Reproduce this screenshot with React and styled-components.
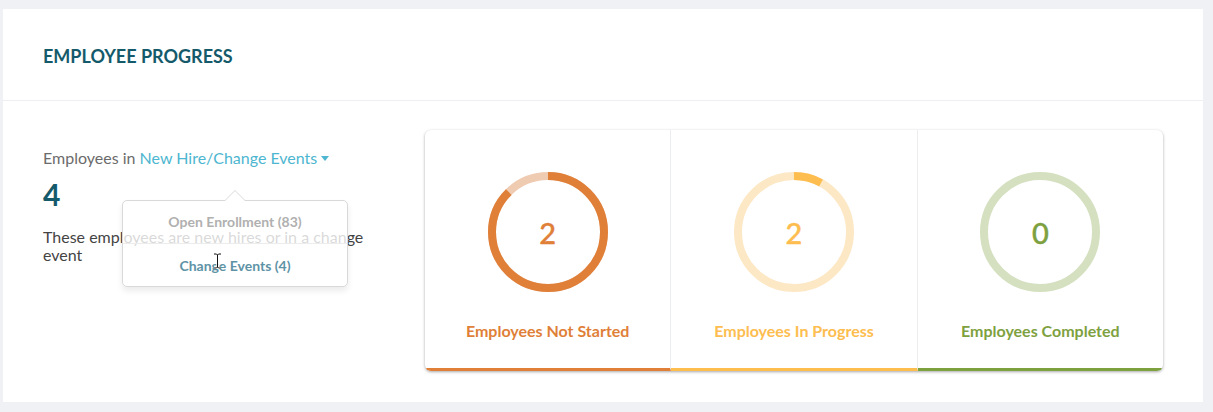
import React from "react";
import styled, { createGlobalStyle } from "styled-components";

const Global = createGlobalStyle`
  html, body { margin: 0; padding: 0; background: #eff1f5; }
  body { font-family: Lato, "Open Sans", Arial, sans-serif; }
`;

const Page = styled.div`
  padding: 9px 10px 10px 3px;
`;

const Card = styled.section`
  background: #fff;
  height: 393px;
  display: flex;
  flex-direction: column;
`;

const Header = styled.header`
  height: 92px;
  box-sizing: border-box;
  border-bottom: 1px solid #eeeff2;
  display: flex;
  align-items: center;
  padding: 2px 40px 0;
`;

const Title = styled.h2`
  margin: 0;
  font-size: 18px;
  font-weight: 700;
  color: #155a6b;
`;

const Body = styled.div`
  display: flex;
  padding: 29px 40px 0 40px;
  gap: 50px;
`;

const Summary = styled.div`
  position: relative;
  width: 332px;
  padding-top: 18px;
`;

const Filter = styled.div`
  font-size: 16px;
  color: #6b6b6b;
  line-height: 20px;
`;

const Link = styled.span`
  color: #4db6d0;
  display: inline-flex;
  align-items: center;
  gap: 4px;
`;

const Caret = styled.span`
  display: inline-block;
  width: 0;
  height: 0;
  border-left: 4.5px solid transparent;
  border-right: 4.5px solid transparent;
  border-top: 5px solid #4db6d0;
  margin-top: 1px;
`;

const Count = styled.div`
  font-size: 30px;
  font-weight: 700;
  color: #155a6b;
  line-height: 36px;
  margin-top: 8px;
`;

const Desc = styled.p`
  margin: 16px 0 0;
  font-size: 16px;
  line-height: 18px;
  color: #444;
`;

const Popover = styled.div`
  position: absolute;
  left: 79px;
  top: 70px;
  width: 226px;
  height: 87px;
  box-sizing: border-box;
  background: rgba(255, 255, 255, 0.8);
  border: 1px solid #d9d9d9;
  border-radius: 5px;
  box-shadow: 0 4px 6px rgba(0, 0, 0, 0.08);
  display: flex;
  flex-direction: column;

  &::before {
    content: "";
    position: absolute;
    top: -11px;
    left: 101px;
    width: 0;
    height: 0;
    border-left: 11px solid transparent;
    border-right: 11px solid transparent;
    border-bottom: 11px solid #d9d9d9;
  }
  &::after {
    content: "";
    position: absolute;
    top: -10px;
    left: 102px;
    width: 0;
    height: 0;
    border-left: 10px solid transparent;
    border-right: 10px solid transparent;
    border-bottom: 10px solid #fff;
  }
`;

const Option = styled.div`
  flex: 1;
  display: flex;
  align-items: center;
  justify-content: center;
  font-size: 14px;
  font-weight: 700;
  color: ${(p) => (p.$active ? "#5e93a6" : "#b0b0b0")};
  padding-top: ${(p) => (p.$active ? "1px" : "0")};
  border-top: ${(p) => (p.$divider ? "1px solid #ececec" : "none")};
`;

const Cursor = styled.svg`
  position: absolute;
  left: 170px;
  top: 123px;
`;

const Stats = styled.div`
  flex: 1;
  display: flex;
  height: 241px;
  border-radius: 6px;
  box-shadow: 0 1px 3px rgba(0, 0, 0, 0.35);
  overflow: hidden;
  background: #fff;
`;

const Stat = styled.div`
  flex: 1;
  display: flex;
  flex-direction: column;
  align-items: center;
  padding-top: 42px;
  box-sizing: border-box;
  border-right: 1px solid #ecedf0;
  border-bottom: 3px solid ${(p) => p.$color};
  &:last-child { border-right: none; }
`;

const Ring = styled.div`
  position: relative;
  width: 120px;
  height: 120px;
  display: flex;
  align-items: center;
  justify-content: center;
  svg { position: absolute; inset: 0; }
`;

const Value = styled.span`
  position: relative;
  font-size: 29px;
  color: ${(p) => p.$color};
  font-weight: 500;
  -webkit-text-stroke: 0.4px ${(p) => p.$color};
`;

const Label = styled.div`
  margin-top: 29px;
  font-size: 16px;
  font-weight: 700;
  color: ${(p) => p.$color};
`;

const R = 56;
const C = 2 * Math.PI * R;

function Donut({ value, fraction, color, track }) {
  return (
    <Ring>
      <svg width="120" height="120" viewBox="0 0 120 120">
        <circle cx="60" cy="60" r={R} fill="none" stroke={track} strokeWidth="8" />
        {fraction > 0 && (
          <circle
            cx="60"
            cy="60"
            r={R}
            fill="none"
            stroke={color}
            strokeWidth="8"
            strokeDasharray={`${C * fraction} ${C}`}
            transform="rotate(-90 60 60)"
          />
        )}
      </svg>
      <Value $color={color}>{value}</Value>
    </Ring>
  );
}

const stats = [
  { label: "Employees Not Started", value: 2, fraction: 0.875, color: "#e07f38", track: "#efcbb2", bar: "#e07f38" },
  { label: "Employees In Progress", value: 2, fraction: 0.08, color: "#fdbd4f", track: "#fde8c6", bar: "#fdbd4f" },
  { label: "Employees Completed", value: 0, fraction: 0, color: "#7ea13f", track: "#d5e0c0", bar: "#7ea13f" },
];

export default function App() {
  return (
    <Page>
      <Global />
      <Card>
        <Header>
          <Title>EMPLOYEE PROGRESS</Title>
        </Header>
        <Body>
          <Summary>
            <Filter>
              Employees in{" "}
              <Link>
                New Hire/Change Events
                <Caret />
              </Link>
            </Filter>
            <Count>4</Count>
            <Desc>These employees are new hires or in a change event</Desc>
            <Popover>
              <Option>Open Enrollment (83)</Option>
              <Option $divider $active>Change Events (4)</Option>
            </Popover>
            <Cursor width="9" height="16" viewBox="0 0 9 16">
              <path d="M1 1h2.5L4.5 2 5.5 1H8M4.5 2v12M1 15h2.5l1-1 1 1H8" fill="none" stroke="#fff" strokeWidth="2.5" />
              <path d="M1 1h2.5L4.5 2 5.5 1H8M4.5 2v12M1 15h2.5l1-1 1 1H8" fill="none" stroke="#111" strokeWidth="1" />
            </Cursor>
          </Summary>
          <Stats>
            {stats.map((s) => (
              <Stat key={s.label} $color={s.bar}>
                <Donut value={s.value} fraction={s.fraction} color={s.color} track={s.track} />
                <Label $color={s.color}>{s.label}</Label>
              </Stat>
            ))}
          </Stats>
        </Body>
      </Card>
    </Page>
  );
}
